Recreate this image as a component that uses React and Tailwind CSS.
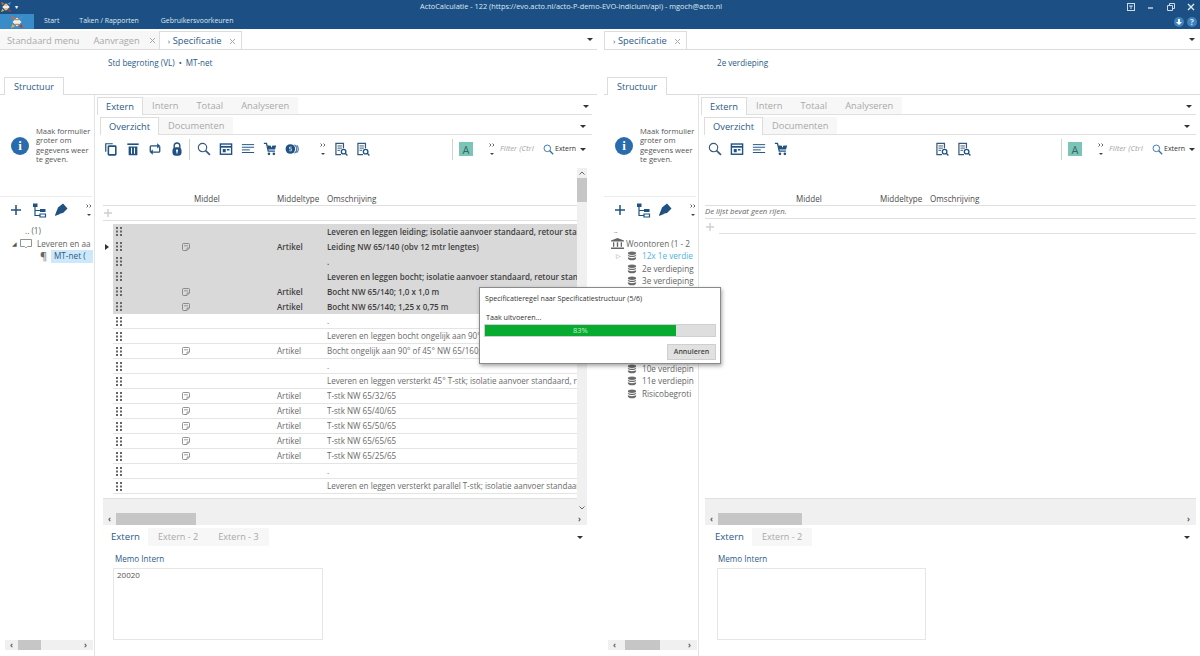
import React from "react";

const C = "#1f5283";
const Caret = ({ className = "" }) => (
  <svg width="6" height="3" viewBox="0 0 6 3" className={className}><path d="M0 0h6L3 3z" fill="#333" /></svg>
);
const Close = ({ className = "ml-[9px]" }) => (
  <svg width="7" height="7" viewBox="0 0 7 7" className={className}><path d="M1 1l5 5M6 1L1 6" stroke="#a8a8a8" strokeWidth="1" /></svg>
);
const Svg = ({ children, s = 14, v = 16 }) => (
  <svg width={s} height={s} viewBox={`0 0 ${v} ${v}`} fill="none">{children}</svg>
);
const ICopy = () => <Svg><path d="M2 11V2h8" stroke={C} strokeWidth="1.4" /><rect x="5" y="4.7" width="8.5" height="10" rx=".8" stroke={C} strokeWidth="1.8" /></Svg>;
const ITrash = () => <Svg><path d="M1.5 2.5h13" stroke={C} strokeWidth="1.8" /><path d="M3 5h10v9.2a1 1 0 01-1 1H4a1 1 0 01-1-1z" fill={C} /><path d="M6.3 6.5v7M9.7 6.5v7" stroke="#fff" strokeWidth="1.2" /></Svg>;
const IRepeat = () => <Svg><path d="M2.6 11V5.5a1 1 0 011-1H11M13.4 5v5.5a1 1 0 01-1 1H5" stroke={C} strokeWidth="1.5" /><path d="M10.5 1.5l3.6 3-3.6 3zM5.5 8.5l-3.6 3 3.6 3z" fill={C} /></Svg>;
const ILock = () => <Svg><path d="M4.8 7V4.4a3.2 3.2 0 016.4 0V7" stroke={C} strokeWidth="1.6" /><rect x="2.8" y="6" width="10.4" height="9.6" rx="4" fill={C} /><circle cx="8" cy="9.8" r="1.3" fill="#fff" /><path d="M7.4 10h1.2v3H7.4z" fill="#fff" /></Svg>;
const ISearch = ({ color = "#34597e", s = 14 }) => <Svg s={s}><circle cx="6.3" cy="6.3" r="4.8" stroke={color} strokeWidth="1.3" /><path d="M9.8 9.8l5 5" stroke={color} strokeWidth="1.9" /></Svg>;
const ICal = () => <Svg><rect x="1.6" y="2.3" width="12.8" height="11.7" stroke={C} strokeWidth="1.6" /><path d="M1.6 5.5h12.8" stroke={C} strokeWidth="2" /><path d="M4.3 8h3.4v3.8H4.3zM9 8h3v1.8H9z" fill={C} /></Svg>;
const IAlign = () => <Svg><path d="M1 3h14M1 6h14M1 9h9M1 12h14" stroke={C} strokeWidth="1.1" /></Svg>;
const ICart = () => <Svg><path d="M1 1.5h3l2 9h7.6" stroke={C} strokeWidth="1.5" /><path d="M5 4h10l-1.2 4.6H6z" fill={C} /><path d="M9.7 1v5M7.5 3.4h4.4" stroke="#fff" strokeWidth="1.1" /><circle cx="6.8" cy="13.5" r="1.5" fill={C} /><circle cx="12.4" cy="13.5" r="1.5" fill={C} /></Svg>;
const ICoin = () => (
  <svg width="15" height="12" viewBox="0 0 17 14" fill="none">
    <circle cx="6" cy="7" r="5.6" fill={C} />
    <path d="M10.8 2a6 6 0 010 10M13.4 2.6a6 6 0 010 8.8" stroke="#4b75a0" strokeWidth="1.3" />
    <path d="M7.6 4.8H5v2h2.3v2.3H4.6" stroke="#cfe0ef" strokeWidth="1" />
  </svg>
);
const IDoc = () => <Svg><path d="M8 14.5H2.2V1.5h8.6V7" stroke="#34597e" strokeWidth="1.4" /><path d="M4 4.5h5M4 7h5M4 9.5h3" stroke="#34597e" strokeWidth="1.1" /><circle cx="11" cy="11" r="2.6" stroke={C} strokeWidth="1.5" /><path d="M13 13l2.3 2.3" stroke={C} strokeWidth="1.6" /></Svg>;
const IPlus = () => <Svg s={14} v={14}><path d="M7 2v10M2 7h10" stroke={C} strokeWidth="1.5" /></Svg>;
const ITree = () => <Svg s={16}><path d="M2 1.5h4.5V5H2z" fill={C} /><path d="M9 7h5.5v3H9z" fill={C} /><path d="M9 12h5.5v3H9z" stroke={C} strokeWidth="1.2" /><path d="M4 5V13.5H9M4 8.5H9" stroke={C} strokeWidth="1.2" /></Svg>;
const IPen = () => <Svg s={16}><path d="M5 5.5L10 1.5l4.5 5L10 11l-6.5 1.5-1.5 1z" fill={C} /><path d="M2 14l2-5 3 3z" fill={C} /></Svg>;
const Chev = () => (
  <div className="flex flex-col items-center justify-center gap-[6px] w-[8px]">
    <svg width="6" height="4" viewBox="0 0 6 4" fill="none"><path d="M.5.5L2 2 .5 3.5M3.5.5L5 2 3.5 3.5" stroke="#444" strokeWidth=".8" /></svg>
    <svg width="4" height="2" viewBox="0 0 4 2"><path d="M0 0h4L2 2z" fill="#444" /></svg>
  </div>
);
const Grip = () => (
  <svg width="6" height="9" viewBox="0 0 6 9"><g fill="#666"><rect width="2" height="2" /><rect x="4" width="2" height="2" /><rect y="3.5" width="2" height="2" /><rect x="4" y="3.5" width="2" height="2" /><rect y="7" width="2" height="2" /><rect x="4" y="7" width="2" height="2" /></g></svg>
);
const Note = () => (
  <svg width="8" height="8" viewBox="0 0 8 8" fill="none"><path d="M.5 1.5a1 1 0 011-1h5a1 1 0 011 1V5L5 7.5H1.5a1 1 0 01-1-1z" stroke="#777" strokeWidth=".8" /><path d="M2 2.8h4M5 7V5h2" stroke="#777" strokeWidth=".7" /></svg>
);
const Stack = () => (
  <svg width="10" height="10" viewBox="0 0 11 10" className="shrink-0"><g fill="#6b6b6b"><ellipse cx="5.5" cy="2" rx="4.5" ry="1.9" /><path d="M1 3.6c1.2 1.6 7.8 1.6 9 0v1.2C9 6.6 2 6.6 1 4.8zM1 6.2c1.2 1.6 7.8 1.6 9 0v1.5C9 10.4 2 10.4 1 7.7z" /></g></svg>
);
const Bank = () => (
  <svg width="13" height="11" viewBox="0 0 13 11"><path d="M6.5 0L13 2.6v.9H0v-.9zM0 9.5h13V11H0zM2 4.3h1.3v4.5H2zM5.8 4.3h1.4v4.5H5.8zM9.7 4.3H11v4.5H9.7z" fill="#666" /></svg>
);
const Logo = ({ s }) => (
  <svg width={s} height={s} viewBox="0 0 12 12">
    <path d="M0 0l4 1.5L1.5 4z" fill="#e0652c" />
    <path d="M12 0L8 1.5 10.5 4z" fill="#4a90d0" />
    <path d="M0 12l4-1.5L1.5 8z" fill="#e8b23a" />
    <path d="M12 12l-4-1.5L10.5 8z" fill="#c8352c" />
    <path d="M6 1.5L10.5 6 6 10.5 1.5 6z" fill="#f3f0e6" />
    <path d="M4 3h4v1.2H4zM4 7.8h4V9H4z" fill="#d68a3a" />
  </svg>
);

const rows = [
  { g: 1, b: 1, t: "Leveren en leggen leiding; isolatie aanvoer standaard, retour standaard" },
  { g: 1, a: 1, b: 1, t: "Leiding NW 65/140 (obv 12 mtr lengtes)", cur: 1 },
  { g: 1, b: 1, t: "." },
  { g: 1, b: 1, t: "Leveren en leggen bocht; isolatie aanvoer standaard, retour standaard" },
  { g: 1, a: 1, b: 1, t: "Bocht NW 65/140; 1,0 x 1,0 m" },
  { g: 1, a: 1, b: 1, t: "Bocht NW 65/140; 1,25 x 0,75 m" },
  { t: "." },
  { t: "Leveren en leggen bocht ongelijk aan 90° of 45°; isolatie aanvoer standaard" },
  { a: 1, t: "Bocht ongelijk aan 90° of 45° NW 65/160; 1,0 x 1,0 m" },
  { t: "." },
  { t: "Leveren en leggen versterkt 45° T-stk; isolatie aanvoer standaard, retour standaard" },
  { a: 1, t: "T-stk NW 65/32/65" },
  { a: 1, t: "T-stk NW 65/40/65" },
  { a: 1, t: "T-stk NW 65/50/65" },
  { a: 1, t: "T-stk NW 65/65/65" },
  { a: 1, t: "T-stk NW 65/25/65" },
  { t: "." },
  { t: "Leveren en leggen versterkt parallel T-stk; isolatie aanvoer standaard, retour standaard" },
];

const Row = ({ r }) => (
  <div className={`grid grid-cols-[62px_102px_50px_1fr] items-center h-[15px] ml-[10px] text-[8.05px] whitespace-nowrap overflow-hidden ${r.g ? "bg-[#d9d9d9] text-[#3f3f3f]" : "border-b border-[#e4e4e4] text-[#6a6a6a]"} ${r.b ? "font-semibold" : ""}`}>
    <div className="pl-[3px] flex"><Grip /></div>
    <div className="pl-[7px] flex">{r.a ? <Note /> : null}</div>
    <div className="pt-px">{r.a ? "Artikel" : ""}</div>
    <div className="overflow-hidden pt-px">{r.t}</div>
  </div>
);

const Tab = ({ children, active, className = "" }) => (
  <div className={`flex items-center pt-px whitespace-nowrap ${active ? "text-[#2c5a88] bg-white font-medium" : "text-[#a9a9a9]"} ${className}`}>{children}</div>
);

const HScroll = ({ thumb, offset, className = "" }) => (
  <div className={`flex items-center bg-[#f0f0f0] ${className}`}>
    <span className="w-[13px] text-center text-[8px] leading-none text-[#555] font-bold">‹</span>
    <div className="h-full bg-[#c6c6c6]" style={{ width: thumb, marginLeft: offset }} />
    <span className="ml-auto w-[9px] text-[8px] leading-none text-[#555] font-bold">›</span>
  </div>
);

const Sidebar = ({ children, width }) => (
  <div className="w-[95px] shrink-0 border-r border-[#e3e3e3] flex flex-col h-[561px]">
    <div className="h-[102px] flex items-center pl-[11px] border-b border-[#ececec] mr-[2px]">
      <div className="w-[18px] h-[18px] rounded-full bg-[#2a6cab] flex items-center justify-center text-white font-bold text-[13px] leading-none shrink-0 font-['Liberation_Serif',serif]">i</div>
      <div className="ml-[7px] text-[7.6px] leading-[9.4px] text-[#555] whitespace-nowrap">Maak formulier<br />groter om<br />gegevens weer<br />te geven.</div>
    </div>
    <div className="h-[26px] flex items-center shrink-0 pl-[9px]">
      <div className="w-[22px] flex"><IPlus /></div>
      <div className="w-[22px] flex"><ITree /></div>
      <div className="w-[22px] flex"><IPen /></div>
      <div className="ml-[10px]"><Chev /></div>
    </div>
    <div className="flex-1 text-[8.2px] text-[#666] leading-[12.5px] overflow-hidden whitespace-nowrap pt-[2px]">{children}</div>
    <HScroll thumb={width} offset={width > 30 ? "4px" : "0"} className={`${width > 30 ? "ml-[4px] mr-[1px]" : "ml-[5px] mr-[1px]"} h-[10px] mb-[6px] shrink-0`} />
  </div>
);

const Filter = () => (
  <div className="flex items-center ml-[5px]">
    <Chev />
    <div className="ml-[4px] w-[87px] h-[14px] flex items-center bg-white text-[7.8px]">
      <span className="italic text-[#a5a5a5] w-[43px] overflow-hidden whitespace-nowrap">Filter (Ctrl</span>
      <ISearch color="#2a6cab" s={11} />
      <span className="ml-[1px] text-[7px] text-[#333]">Extern</span>
      <Caret className="ml-[4px]" />
    </div>
  </div>
);

const SubBar = ({ tabs, className = "", caretClass = "" }) => (
  <div className={`flex items-end border-b border-[#dfdfdf] text-[9.3px] ${className}`}>
    {tabs}
    <Caret className={`ml-auto mb-[6px] ${caretClass}`} />
  </div>
);

const Pane = ({ right }) => (
  <div className={`flex flex-col h-[627px] ${right ? "w-[596px] ml-[7px]" : "w-[597px]"}`}>
    <div className={`h-[21px] flex items-end border-b border-[#dddddd] text-[9.3px] shrink-0 ${right ? "pr-[5px]" : "pr-[4px]"}`}>
      {!right && (
        <>
          <Tab className="pl-[7px] h-[18px] bg-[#f7f7f7] pr-[14px]">Standaard menu</Tab>
          <Tab className="h-[18px] bg-[#f7f7f7] pr-[3px]">Aanvragen<Close /></Tab>
        </>
      )}
      <div className="flex items-center pt-px h-[18px] border border-b-0 border-[#dddddd] pl-[8px] pr-[5px] text-[#2c5a88] font-medium whitespace-nowrap">
        <span className="text-[8px] w-[5px]">›</span>Specificatie<Close className="ml-[7px]" />
      </div>
      <Caret className="ml-auto mb-[8px]" />
    </div>
    <div className={`h-[27px] flex items-center text-[8.1px] text-[#2c5a88] font-medium shrink-0 ${right ? "pl-[113px]" : "pl-[108px]"}`}>
      {right ? "2e verdieping" : <>Std begroting (VL)<span className="mx-[4px]">•</span>MT-net</>}
    </div>
    <div className={`h-[18px] flex items-end border-b border-[#dcdcdc] shrink-0 ${right ? "pl-[3px]" : "pl-[4px]"}`}>
      <div className="h-[18px] w-[60px] flex items-center justify-center border border-b-0 border-[#dcdcdc] text-[9.1px] text-[#2c5a88] font-medium -mb-px bg-white">Structuur</div>
    </div>
    <div className="flex flex-1">
      {right ? (
        <Sidebar width={35}>
          <div className="pl-[7px]">
            <div className="pl-[3px] text-[7px]">..</div>
            <div className="flex items-center gap-[2px]"><Bank /><span>Woontoren (1 - 2</span></div>
            <div className="flex items-center pl-[5px] text-[#4fb3e0]"><span className="w-[11px] text-[6px] text-[#999]">▷</span><span className="mr-[5px]"><Stack /></span>12x 1e verdie</div>
            {["2e verdieping", "3e verdieping", "4e verdieping", "5e verdieping", "6e verdieping", "7e verdieping", "8e verdieping", "9e verdieping", "10e verdiepin", "11e verdiepin", "Risicobegroti"].map((t) => (
              <div key={t} className="flex items-center pl-[16px] gap-[5px]"><Stack />{t}</div>
            ))}
          </div>
        </Sidebar>
      ) : (
        <Sidebar width={23}>
          <div className="pl-[25px]">.. (1)</div>
          <div className="flex items-center pl-[12px] gap-[3px]">
            <span className="text-[6px] text-[#555]">◢</span>
            <svg width="12" height="9" viewBox="0 0 12 9" fill="none"><path d="M.5.5h11v7h-4l-1 1h-1l-1-1h-4z" stroke="#777" strokeWidth=".8" /></svg>
            <span className="ml-[2px]">Leveren en aa</span>
          </div>
          <div className="flex items-center pl-[40px]">
            <span className="text-[#666] text-[11px] w-[11px] leading-[12px]">¶</span>
            <span className="w-[42px] pl-[3px] bg-[#cde8fa] text-[#2c5a88] font-medium">MT-net (</span>
          </div>
        </Sidebar>
      )}
      <div className="w-[495px] ml-[2px] flex flex-col">
        <div className="h-[20px] pt-[2px] shrink-0">
          <SubBar
            className="h-[18px]"
            caretClass={right ? "mr-[4px]" : "mr-[3px]"}
            tabs={
              <>
                <Tab active className="h-[18px] border border-b-0 border-[#dddddd] px-[8px] -mb-px">Extern</Tab>
                <Tab className="h-[17px] bg-[#f7f7f7] px-[9px]">Intern</Tab>
                <Tab className="h-[17px] bg-[#f7f7f7] px-[9px]">Totaal</Tab>
                <Tab className="h-[17px] bg-[#f7f7f7] px-[9px]">Analyseren</Tab>
              </>
            }
          />
        </div>
        <div className="h-[20px] pt-[2px] shrink-0">
          <SubBar
            className="h-[18px] ml-[3px]"
            caretClass="mr-[6px]"
            tabs={
              <>
                <Tab active className="h-[18px] border border-b-0 border-[#dddddd] px-[8px] -mb-px">Overzicht</Tab>
                <Tab className="h-[17px] bg-[#f7f7f7] px-[9px]">Documenten</Tab>
              </>
            }
          />
        </div>
        <div className={`h-[22px] mt-[3px] flex items-center shrink-0 pl-[3px] ${right ? "" : "mr-[5px]"}`}>
          {!right && (
            <>
              {[<ICopy />, <ITrash />, <IRepeat />, <ILock />].map((x, i) => (
                <div key={i} className="w-[22px] flex justify-center">{x}</div>
              ))}
              <div className="w-px h-[21px] bg-[#c9d6d0] mx-[1px]" />
              <div className="w-[2px]" />
            </>
          )}
          {[<ISearch />, <ICal />, <IAlign />, <ICart />].map((x, i) => (
            <div key={i} className="w-[22px] flex justify-center">{x}</div>
          ))}
          {!right ? (
            <>
              <div className="w-[22px] flex justify-center"><ICoin /></div>
              <div className="ml-[16px] mr-[3px]"><Chev /></div>
            </>
          ) : (
            <div className="w-[139px]" />
          )}
          <div className="w-[22px] flex justify-center"><IDoc /></div>
          <div className="w-[22px] flex justify-center"><IDoc /></div>
          <div className="ml-auto flex items-center">
            <div className="w-px h-[21px] bg-[#c9d6d0]" />
            <div className="ml-[6px] w-[14px] h-[14px] bg-[#7cc4b8] flex items-center justify-center text-[#2f6a62] text-[11px] leading-none">A</div>
            <div className="ml-[10px]" />
            <Filter />
          </div>
        </div>
        <div className={`flex h-[345px] mt-[8px] shrink-0 ${right ? "ml-[4px]" : "ml-[6px] mr-[5px]"}`}>
          <div className="flex-1 flex flex-col min-w-0">
            <div className="h-[24px] shrink-0" />
            <div className={`h-[14px] pt-px grid items-center border-b border-[#dfdfdf] text-[8.1px] text-[#4a4a4a] font-medium shrink-0 ${right ? "grid-cols-[91px_84px_50px_1fr]" : "grid-cols-[91px_83px_50px_1fr]"}`}>
              <div />
              <div>Middel</div>
              <div>Middeltype</div>
              <div>Omschrijving</div>
            </div>
            {right && (
              <div className="h-[13px] flex items-center italic text-[7.8px] text-[#666] shrink-0 border-b border-[#dfdfdf]">De lijst bevat geen rijen.</div>
            )}
            <div className={`h-[15px] flex items-center shrink-0 ${right ? "" : "border-b border-[#dfdfdf]"}`}>
              <svg width="10" height="10" viewBox="0 0 10 10"><path d="M5 1v8M1 5h8" stroke="#cfcfcf" strokeWidth="1.4" /></svg>
              {right && <div className="flex-1 h-px bg-[#e0e0e0] ml-[4px] mt-[13px]" />}
            </div>
            {!right && (
              <div className="relative mt-[3px] flex-1 min-h-0">
                <svg width="4" height="6" viewBox="0 0 4 6" className="absolute left-[2px] top-[20px]"><path d="M0 0l4 3-4 3z" fill="#333" /></svg>
                {rows.map((r, i) => <Row key={i} r={r} />)}
              </div>
            )}
            {right && <div className="flex-1 min-h-0" />}
            <div className="h-[15px] bg-[#f0f0f0] border-t border-[#e0e0e0] shrink-0" />
          </div>
          {!right && (
            <div className="w-[10px] bg-[#f0f0f0] flex flex-col items-center shrink-0">
              <svg width="6" height="4" viewBox="0 0 6 4" className="mt-[3px]" fill="none"><path d="M.5 3.5L3 1l2.5 2.5" stroke="#666" strokeWidth="1" /></svg>
              <div className="w-full h-[24px] bg-[#c6c6c6] mt-[3px]" />
              <svg width="6" height="4" viewBox="0 0 6 4" className="mt-auto mb-[3px]" fill="none"><path d="M.5.5L3 3 5.5.5" stroke="#666" strokeWidth="1" /></svg>
            </div>
          )}
        </div>
        <HScroll thumb={right ? 84 : 80} offset="0" className={`h-[12px] shrink-0 ${right ? "ml-[4px]" : "ml-[6px] mr-[5px]"}`} />
        <div className="h-[20px] mt-[2px] flex items-center shrink-0 ml-[14px]">
          <span className="text-[9.6px] text-[#2c5a88] font-medium">Extern</span>
          <span className="ml-[8px] h-[18px] flex items-center bg-[#f7f7f7] px-[10px] text-[9.1px] text-[#a9a9a9]">Extern - 2</span>
          {!right && <span className="h-[18px] flex items-center bg-[#f7f7f7] px-[10px] text-[9.1px] text-[#a9a9a9]">Extern - 3</span>}
          <Caret className={`ml-auto ${right ? "mr-[6px]" : "mr-[9px]"}`} />
        </div>
        <div className={`mt-[7px] text-[8.1px] text-[#2c5a88] font-medium shrink-0 leading-[10px] ${right ? "ml-[17px]" : "ml-[18px]"}`}>Memo Intern</div>
        <div className={`mt-[4px] h-[72px] border border-[#e6e6e6] text-[8px] leading-[12px] text-[#555] pl-[3px] shrink-0 ml-[16px] ${right ? "w-[209px]" : "w-[210px]"}`}>{right ? "" : "20020"}</div>
      </div>
    </div>
  </div>
);

export default function App() {
  return (
    <div className="relative w-[1200px] h-[656px] overflow-hidden bg-white font-['Open_Sans','Noto_Sans',sans-serif] text-[#444]">
      <div className="h-[29px] bg-[#1c5084] flex flex-col text-white">
        <div className="h-[14px] flex items-center">
          <div className="ml-[1px] flex"><Logo s={10} /></div>
          <span className="ml-[4px] text-[6px] leading-none">▾</span>
          <div className="ml-[402px] text-[7.35px] text-[#dfe9f2] whitespace-nowrap">ActoCalculatie - 122 (https://evo.acto.nl/acto-P-demo-EVO-indicium/api) - mgoch@acto.nl</div>
          <div className="ml-auto flex items-center gap-[12px] pr-[5px]">
            <svg width="8" height="8" viewBox="0 0 8 8" fill="none"><rect x=".5" y=".5" width="7" height="7" stroke="#cfdbe7" /><path d="M2 3h4M4 3v3" stroke="#cfdbe7" /></svg>
            <svg width="8" height="8" viewBox="0 0 8 8" fill="none"><path d="M1 5h5" stroke="#cfdbe7" strokeWidth="1.4" /></svg>
            <svg width="8" height="8" viewBox="0 0 8 8" fill="none"><path d="M.5 2.5h5v5h-5zM2.5 2V.5h5v5H6" stroke="#cfdbe7" /></svg>
            <svg width="8" height="8" viewBox="0 0 8 8" fill="none"><path d="M1 1l6 6M7 1L1 7" stroke="#dfe9f2" strokeWidth="1.4" /></svg>
          </div>
        </div>
        <div className="h-[15px] flex items-center text-[6.9px] text-[#dfe9f2]">
          <div className="w-[34px] h-full bg-[#3a8cc9] flex items-center justify-center"><Logo s={12} /></div>
          <span className="ml-[10px]">Start</span>
          <span className="ml-[20px]">Taken / Rapporten</span>
          <span className="ml-[22px]">Gebruikersvoorkeuren</span>
          <div className="ml-auto flex items-center gap-[3px] pr-[3px]">
            <div className="w-[10px] h-[10px] rounded-full bg-[#3f82bd] flex items-center justify-center"><svg width="6" height="6" viewBox="0 0 6 6"><path d="M2 0h2v3h2L3 6 0 3h2z" fill="#fff" /></svg></div>
            <div className="w-[10px] h-[10px] rounded-full bg-[#3f82bd] flex items-center justify-center text-[8px] font-bold leading-none">?</div>
          </div>
        </div>
      </div>
      <div className="flex">
        <Pane />
        <Pane right />
      </div>
      <div className="absolute left-[479px] top-[287px] w-[242px] h-[77px] bg-white border border-[#8a8a8a] shadow-[1px_2px_4px_rgba(0,0,0,0.35)] px-[4px] text-[#333]">
        <div className="mt-[4px] h-[12px] pl-px text-[7.1px] leading-[12px] whitespace-nowrap">Specificatieregel naar Specificatiestructuur (5/6)</div>
        <div className="mt-[8px] text-[7.2px] leading-[11px] pl-[2px]">Taak uitvoeren...</div>
        <div className="mt-[1px] h-[13px] bg-[#dedede] border border-[#d0d0d0]">
          <div className="h-full w-[83%] bg-[#06ab2f] flex items-center justify-center text-[7.5px] text-[#cdeed6]">83%</div>
        </div>
        <div className="mt-[7px] flex justify-end">
          <div className="w-[49px] h-[16px] bg-[#e1e1e1] border border-[#cfcfcf] flex items-center justify-center font-semibold text-[7px] text-[#444]">Annuleren</div>
        </div>
      </div>
    </div>
  );
}
